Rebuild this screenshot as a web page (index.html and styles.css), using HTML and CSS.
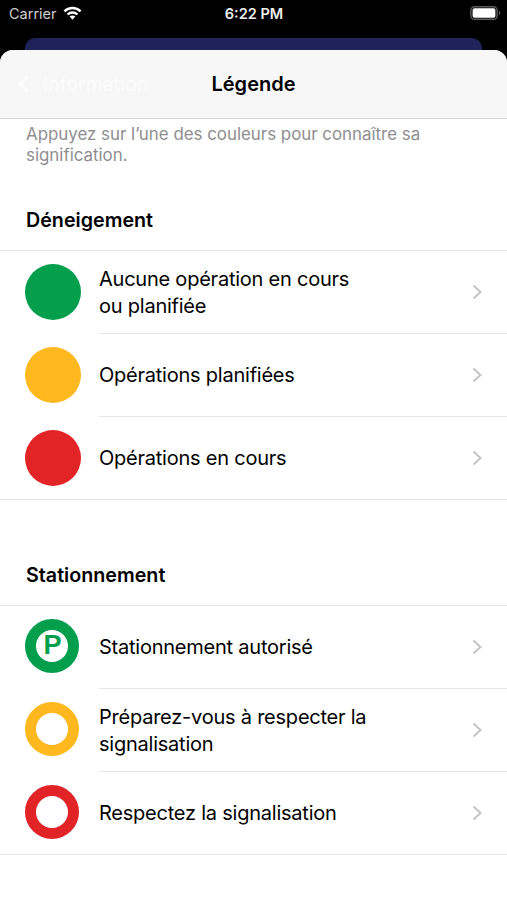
FILE: index.html
```html
<!DOCTYPE html>
<html lang="fr">
<head>
<meta charset="utf-8">
<title>Légende</title>
<link rel="stylesheet" href="styles.css">
</head>
<body>
<div class="status">
  <div class="carrier"><span>Carrier</span>
    <svg class="wifi" width="19" height="14" viewBox="0 0 20 14"><g fill="none" stroke="#fff" stroke-width="2.5"><path d="M1.5 5.2a12.2 12.2 0 0 1 17 0"/><path d="M4.8 8.6a7.4 7.4 0 0 1 10.4 0"/></g><path fill="#fff" d="M7 10.8a4.2 4.2 0 0 1 6 0L10 14z"/></svg>
  </div>
  <span class="time">6:22 PM</span>
  <svg class="battery" width="31" height="14" viewBox="0 0 31 14"><rect x=".9" y=".7" width="26.2" height="12.6" rx="3.6" fill="none" stroke="#5c5c5e" stroke-width="1.4"/><rect x="2.6" y="2.3" width="22.8" height="9.4" rx="1.8" fill="#fff"/><path d="M28.8 4.8c2 .8 2 3.6 0 4.4z" fill="#5c5c5e"/></svg>
</div>
<div class="behind"></div>
<div class="sheet">
  <header class="nav">
    <div class="ghost"><svg width="12" height="20" viewBox="0 0 12 20"><path d="M10 2L2 10l8 8" fill="none" stroke="#fdfdfd" stroke-width="2.5"/></svg><span>Information</span></div>
    <h1>Légende</h1>
  </header>
  <p class="hint">Appuyez sur l’une des couleurs pour connaître sa<br>signification.</p>
  <h2>Déneigement</h2>
  <ul class="list">
    <li><i class="dot green"></i><div class="row"><span>Aucune opération en cours<br>ou planifiée</span><svg class="chev" viewBox="0 0 10 16"><path d="M1.5 1.5L8.5 8l-7 6.5"/></svg></div></li>
    <li><i class="dot yellow"></i><div class="row"><span>Opérations planifiées</span><svg class="chev" viewBox="0 0 10 16"><path d="M1.5 1.5L8.5 8l-7 6.5"/></svg></div></li>
    <li><i class="dot red"></i><div class="row"><span>Opérations en cours</span><svg class="chev" viewBox="0 0 10 16"><path d="M1.5 1.5L8.5 8l-7 6.5"/></svg></div></li>
  </ul>
  <h2 class="second">Stationnement</h2>
  <ul class="list">
    <li><i class="ring green"><b>P</b></i><div class="row"><span>Stationnement autorisé</span><svg class="chev" viewBox="0 0 10 16"><path d="M1.5 1.5L8.5 8l-7 6.5"/></svg></div></li>
    <li><i class="ring yellow"></i><div class="row"><span>Préparez-vous à respecter la<br>signalisation</span><svg class="chev" viewBox="0 0 10 16"><path d="M1.5 1.5L8.5 8l-7 6.5"/></svg></div></li>
    <li><i class="ring red"></i><div class="row"><span>Respectez la signalisation</span><svg class="chev" viewBox="0 0 10 16"><path d="M1.5 1.5L8.5 8l-7 6.5"/></svg></div></li>
  </ul>
</div>
</body>
</html>
```
FILE: styles.css
```css
* { box-sizing: border-box; margin: 0; padding: 0; }
body { background: #000; font-family: Inter, "Liberation Sans", sans-serif; color: #000; width: 507px; height: 900px; overflow: hidden; }
.status { height: 38px; padding: 0 6px 12px 9px; display: grid; grid-template-columns: 1fr auto 1fr; align-items: center; color: #fff; font-size: 14.5px; }
.carrier { display: flex; align-items: center; gap: 6px; color: #ccc; }
.time { font-weight: 600; color: #eee; padding: 1px 2px 0 0; }
.battery { justify-self: end; }
.behind { height: 12px; margin: 0 25px; background: #20225a; border-radius: 10px 10px 0 0; }
.sheet { height: 850px; background: #fff; border-radius: 13px 13px 0 0; overflow: hidden; }
.nav { height: 69px; background: #f7f7f7; border-bottom: 1px solid #d4d4d4; display: grid; grid-template-columns: 1fr auto 1fr; align-items: center; }
.nav h1 { font-size: 20px; font-weight: 600; grid-column: 2; }
.ghost { color: #fcfcfc; display: flex; align-items: center; gap: 13px; padding-left: 18px; font-size: 19.5px; }
.hint { padding: 5px 26px 0; height: 91px; font-size: 16.9px; letter-spacing: -.01px; line-height: 21px; color: #8e8e90; }
h2 { font-size: 19.7px; font-weight: 600; line-height: 20px; padding-left: 26px; height: 40px; }
.second { margin-top: 65px; }
.list { list-style: none; border-top: 1px solid #e6e6e8; border-bottom: 1px solid #e6e6e8; }
.list li { height: 83px; display: flex; padding-left: 25px; }
.list li:first-child { height: 82px; }
.row { flex: 1; display: flex; align-items: center; justify-content: space-between; padding-right: 25px; font-size: 20px; letter-spacing: -.23px; line-height: 27px; }
.row span { padding-top: 1px; }
li + li .row { border-top: 1px solid #e6e6e8; }
.dot, .ring { flex: none; align-self: center; border-radius: 50%; }
.dot { width: 56px; height: 56px; margin: 0 18px 0 0; background: currentColor; }
.ring { width: 54px; height: 54px; margin: 0 20px 2px 0; border: 11px solid currentColor; display: flex; align-items: center; justify-content: center; }
li:first-child .ring { margin-bottom: 3px; }
.ring b { font: bold 27px/1 "Liberation Sans", sans-serif; padding-left: 1px; }
.green { color: #049f4d; }
.yellow { color: #ffb91f; }
.red { color: #e32427; }
.chev { width: 10px; height: 16px; fill: none; stroke: #c4c4c7; stroke-width: 2; }
```
